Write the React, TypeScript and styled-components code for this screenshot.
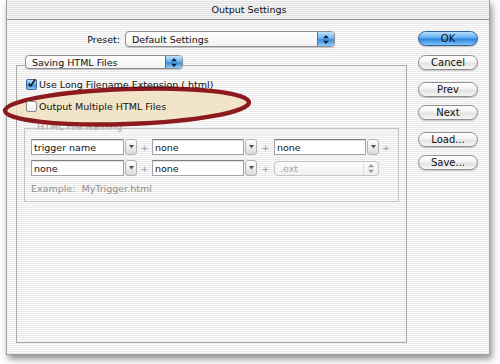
import styled, { createGlobalStyle, css } from 'styled-components';

const GlobalStyle = createGlobalStyle`
	html, body {
		margin: 0;
		padding: 0;
		background: #fff;
	}
	body {
		color: #111;
		font-family: "DejaVu Sans", "Liberation Sans", sans-serif;
		font-size: 9.5px;
	}
`;

const pinstripe = css`
	background: repeating-linear-gradient(to bottom, #fafafa 0 1px, #ebebeb 1px 2px);
`;

const Screen = styled.div`
	box-sizing: border-box;
	height: 364px;
	overflow: hidden;
	padding-left: 6px;
	width: 500px;
`;

const Window = styled.div`
	${pinstripe};
	border: 1px solid #a0a0a0;
	border-top: none;
	box-shadow: 2px 4px 7px rgba(0, 0, 0, 0.45);
	box-sizing: border-box;
	display: flex;
	flex-direction: column;
	height: 355px;
	position: relative;
	width: 484px;
`;

const TitleBar = styled.div`
	align-items: center;
	background: repeating-linear-gradient(to bottom, #f5f5f5 0 1px, #e3e3e3 1px 2px);
	border-bottom: 1px solid #8c8c8c;
	display: flex;
	font-size: 9.5px;
	height: 19px;
	justify-content: center;
	padding-left: 2px;
`;

const Body = styled.div`
	display: grid;
	flex: 1;
	grid-template-columns: 391px 1fr;
	padding-left: 9px;
`;

const MainColumn = styled.div`
	display: flex;
	flex-direction: column;
	padding-bottom: 11px;
	padding-top: 11px;
`;

const PresetRow = styled.div`
	align-items: center;
	display: flex;
	gap: 5px;
`;

const PresetLabel = styled.span`
	text-align: right;
	width: 104px;
`;

const Popup = styled.div<{ $width: number; $height: number; $raised?: boolean }>`
	align-items: center;
	background: linear-gradient(#ffffff, #f1f1f1);
	border: 1px solid #8e8e8e;
	border-radius: 4px;
	box-shadow: 0 1px 1px rgba(0, 0, 0, 0.18);
	box-sizing: border-box;
	display: flex;
	height: ${(p) => p.$height}px;
	overflow: hidden;
	width: ${(p) => p.$width}px;
	${(p) =>
		p.$raised &&
		css`
			margin-left: 9px;
			margin-top: 8px;
			position: relative;
			z-index: 1;
		`}
`;

const PopupText = styled.span`
	flex: 1;
	padding-left: 6px;
`;

const BlueArrows = styled.span`
	align-items: center;
	align-self: stretch;
	background: linear-gradient(#c3e3fb 0%, #6db6f1 45%, #3a8fe0 55%, #8ccbf6 100%);
	border-left: 1px solid #3f77b0;
	display: flex;
	justify-content: center;
	width: 16px;
`;

const GroupBox = styled.div`
	border: 1px solid #a9a9a9;
	display: flex;
	flex: 1;
	flex-direction: column;
	margin-top: -4px;
	padding: 12px 7px 0;
`;

const CheckRow = styled.label<{ $top?: boolean }>`
	align-items: center;
	display: flex;
	gap: 2px;
	height: 12px;
	margin-left: 2px;
	margin-top: ${(p) => (p.$top ? 0 : 10)}px;
	position: relative;
	z-index: 2;
`;

const Box = styled.span<{ $checked?: boolean }>`
	align-items: center;
	background: ${(p) =>
		p.$checked
			? 'linear-gradient(#bfe0fa, #5ba9ec 50%, #2f84d8 55%, #93cdf6)'
			: 'linear-gradient(#ffffff, #ededed)'};
	border: 1px solid ${(p) => (p.$checked ? '#35689c' : '#8a8a8a')};
	border-radius: 2px;
	box-sizing: border-box;
	display: flex;
	height: 11px;
	justify-content: center;
	width: 11px;
`;

const SubLabel = styled.span`
	color: #a2a2a2;
	height: 12px;
	margin-left: 13px;
	margin-top: 9px;
`;

const SubBox = styled.div`
	border: 1px solid #c4c4c4;
	display: flex;
	flex-direction: column;
	gap: 5px;
	margin-top: -5px;
	padding: 10px 0 6px 6px;
`;

const FieldRow = styled.div`
	align-items: center;
	display: grid;
	grid-template-columns: 106px 15px 105px 17px 105px 14px;
`;

const Plus = styled.span`
	color: #9a9a9a;
	text-align: center;
`;

const Combo = styled.div`
	display: flex;
	gap: 1px;
	height: 16px;
`;

const ComboField = styled.span`
	align-items: center;
	background: #fff;
	border: 1px solid #a4a4a4;
	border-top-color: #7e7e7e;
	box-shadow: inset 0 1px 1px rgba(0, 0, 0, 0.12);
	display: flex;
	flex: 1;
	padding-left: 2px;
`;

const ComboButton = styled.span`
	align-items: center;
	background: linear-gradient(#ffffff, #dcdcdc);
	border: 1px solid #b3b3b3;
	border-radius: 3px;
	display: flex;
	justify-content: center;
	width: 10px;
`;

const DisabledPopup = styled.div`
	align-items: center;
	background: linear-gradient(#fbfbfb, #f0f0f0);
	border: 1px solid #c3c3c3;
	border-radius: 4px;
	box-sizing: border-box;
	color: #a8a8a8;
	display: flex;
	height: 15px;
	padding-left: 5px;
`;

const GreyArrows = styled.span`
	align-items: center;
	align-self: stretch;
	border-left: 1px solid #e0e0e0;
	display: flex;
	justify-content: center;
	margin-left: auto;
	width: 14px;
`;

const Example = styled.span`
	color: #8e8e8e;
	height: 12px;
	margin-top: 2px;
	white-space: pre;
`;

const ButtonColumn = styled.div`
	display: flex;
	flex-direction: column;
	gap: 12px;
	padding-left: 11px;
	padding-top: 11px;
`;

const ButtonGroup = styled.div<{ $gap: number }>`
	display: flex;
	flex-direction: column;
	gap: ${(p) => p.$gap}px;
`;

const AquaButton = styled.button<{ $primary?: boolean }>`
	background: ${(p) =>
		p.$primary
			? 'linear-gradient(#b9defb 0%, #5fb0f0 45%, #2a84dc 55%, #80c6f8 100%)'
			: 'linear-gradient(#ffffff 0%, #f4f4f4 45%, #e1e1e1 55%, #f7f7f7 100%)'};
	border: 1px solid ${(p) => (p.$primary ? '#2f5f97' : '#8f8f8f')};
	border-radius: 8px;
	box-shadow: 0 1px 1px rgba(0, 0, 0, 0.2);
	color: #111;
	font-family: inherit;
	font-size: 10px;
	height: 15px;
	line-height: 13px;
	padding: 0;
	width: 60px;
`;

const Highlight = styled.svg`
	left: -7px;
	overflow: visible;
	pointer-events: none;
	position: absolute;
	top: 84px;
	z-index: 1;
`;

function UpDown({ color }: { color: string }) {
	return (
		<svg width="6" height="9" viewBox="0 0 6 9">
			<path d="M3 0 L6 3.2 L0 3.2 Z M3 9 L6 5.8 L0 5.8 Z" fill={color} />
		</svg>
	);
}

function Down() {
	return (
		<svg width="5" height="4" viewBox="0 0 5 4">
			<path d="M0 0 L5 0 L2.5 3.5 Z" fill="#555" />
		</svg>
	);
}

function Check() {
	return (
		<svg width="11" height="11" viewBox="0 0 11 11" style={{ marginTop: -2 }}>
			<path d="M2 5.5 L4.5 8.5 L10 0.5" stroke="#111" strokeWidth="2" fill="none" />
		</svg>
	);
}

function ComboBox({ value }: { value: string }) {
	return (
		<Combo>
			<ComboField>{value}</ComboField>
			<ComboButton>
				<Down />
			</ComboButton>
		</Combo>
	);
}

export default function App() {
	return (
		<Screen>
			<GlobalStyle />
			<Window>
				<TitleBar>Output Settings</TitleBar>
				<Body>
					<MainColumn>
						<PresetRow>
							<PresetLabel>Preset:</PresetLabel>
							<Popup $width={210} $height={16}>
								<PopupText>Default Settings</PopupText>
								<BlueArrows>
									<UpDown color="#0d2036" />
								</BlueArrows>
							</Popup>
						</PresetRow>
						<Popup $width={158} $height={14} $raised>
							<PopupText>Saving HTML Files</PopupText>
							<BlueArrows>
								<UpDown color="#0d2036" />
							</BlueArrows>
						</Popup>
						<GroupBox>
							<CheckRow $top>
								<Box $checked>
									<Check />
								</Box>
								Use Long Filename Extension (.html)
							</CheckRow>
							<CheckRow>
								<Box />
								Output Multiple HTML Files
							</CheckRow>
							<SubLabel>HTML File Naming</SubLabel>
							<SubBox>
								<FieldRow>
									<ComboBox value="trigger name" />
									<Plus>+</Plus>
									<ComboBox value="none" />
									<Plus>+</Plus>
									<ComboBox value="none" />
									<Plus>+</Plus>
								</FieldRow>
								<FieldRow>
									<ComboBox value="none" />
									<Plus>+</Plus>
									<ComboBox value="none" />
									<Plus>+</Plus>
									<DisabledPopup>
										.ext
										<GreyArrows>
											<UpDown color="#9a9a9a" />
										</GreyArrows>
									</DisabledPopup>
								</FieldRow>
								<Example>Example:  MyTrigger.html</Example>
							</SubBox>
						</GroupBox>
					</MainColumn>
					<ButtonColumn>
						<ButtonGroup $gap={9}>
							<AquaButton $primary>OK</AquaButton>
							<AquaButton>Cancel</AquaButton>
						</ButtonGroup>
						<ButtonGroup $gap={8}>
							<AquaButton>Prev</AquaButton>
							<AquaButton>Next</AquaButton>
						</ButtonGroup>
						<ButtonGroup $gap={8}>
							<AquaButton>Load...</AquaButton>
							<AquaButton>Save...</AquaButton>
						</ButtonGroup>
					</ButtonColumn>
				</Body>
				<Highlight width="260" height="50" viewBox="0 0 260 50">
					<ellipse
						cx="127"
						cy="22.5"
						rx="122"
						ry="17.5"
						transform="rotate(-2 127 22.5)"
						fill="#f2dfb8"
						fillOpacity="0.75"
						stroke="#8c1a1e"
						strokeWidth="4.5"
					/>
				</Highlight>
			</Window>
		</Screen>
	);
}
